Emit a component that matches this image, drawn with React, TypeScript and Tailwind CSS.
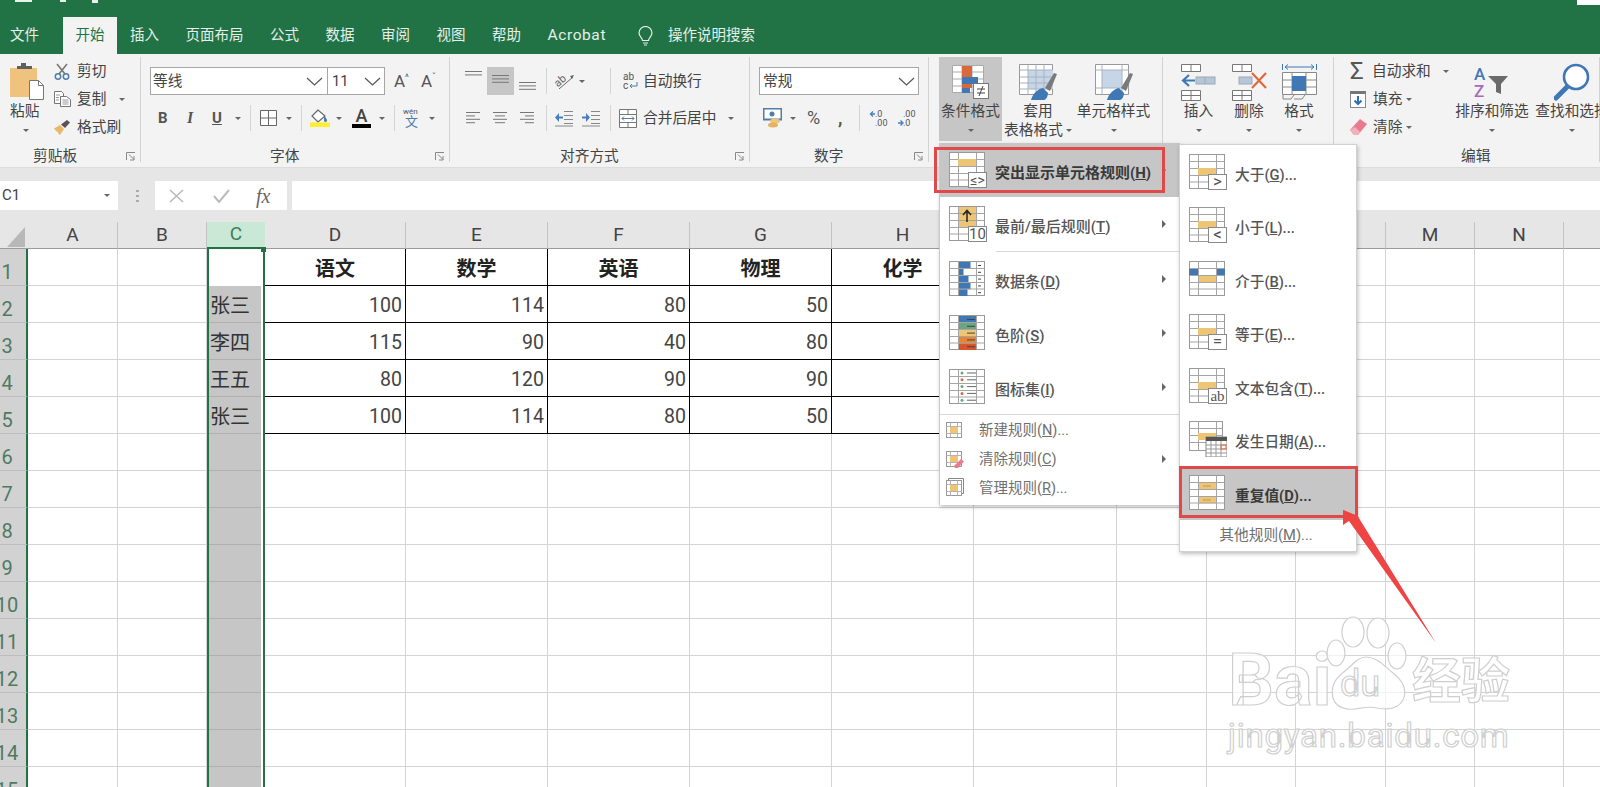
import type { ReactNode } from "react";

function Caret({ className = "" }: { className?: string }) {
  return (
    <span
      className={`inline-block h-0 w-0 shrink-0 border-x-[3px] border-t-[3px] border-x-transparent border-t-[#666] ${className}`}
    />
  );
}

function Sep({ className = "" }: { className?: string }) {
  return <span className={`h-[26px] w-px shrink-0 bg-[#d4d4d4] ${className}`} />;
}

function Chevron() {
  return (
    <svg width="17" height="9" viewBox="0 0 17 9" className="shrink-0">
      <polyline points="1,1 8.5,8 16,1" fill="none" stroke="#555" strokeWidth="1.2" />
    </svg>
  );
}

function Launcher() {
  return (
    <svg width="10" height="9" viewBox="0 0 10 9" className="shrink-0">
      <path d="M.5 8V.5H9M3 2.5l5 5M8 4v4H4" fill="none" stroke="#888" strokeWidth="1" />
    </svg>
  );
}

/* icons, ribbon */
function PasteIcon() {
  return (
    <svg width="34" height="37" viewBox="0 0 34 37">
      <rect x="0" y="5" width="27" height="29" fill="#efc27e" />
      <path d="M7 6V3h4V0h5v3h6v3z" fill="#5f5f5f" />
      <path d="M19.5 17.5h9l5 5v14h-14z" fill="#fff" stroke="#777" />
      <path d="M28.5 17.5v5h5" fill="none" stroke="#777" />
    </svg>
  );
}

function ScissorsIcon() {
  return (
    <svg width="16" height="17" viewBox="0 0 16 17">
      <path d="M5 11 13 1M11 11 3 1" stroke="#777" strokeWidth="1.6" fill="none" />
      <circle cx="4" cy="13.5" r="2.7" fill="none" stroke="#4f7ea8" strokeWidth="1.5" />
      <circle cx="12" cy="13.5" r="2.7" fill="none" stroke="#4f7ea8" strokeWidth="1.5" />
    </svg>
  );
}

function CopyIcon() {
  return (
    <svg width="17" height="16" viewBox="0 0 17 16">
      <path d="M.5.5h7l2 2v3h-3v7h-6z" fill="#fff" stroke="#777" />
      <path d="M6.5 5.5h6l4 3v7h-10z" fill="#fff" stroke="#777" />
      <path d="M2 4h4M2 6.5h3M2 9h3M8.5 9h6M8.5 11h6M8.5 13h6" stroke="#999" />
    </svg>
  );
}

function BrushIcon() {
  return (
    <svg width="17" height="15" viewBox="0 0 17 15">
      <path d="M0 8.5 6 5l4 4-4 6c-2-1-2-3-2-3s-2-.5-4-3.5z" fill="#e9b869" />
      <path d="M7 4.5 13 0l3 2.500-5 5.500z" fill="#555" />
    </svg>
  );
}

function BordersIcon() {
  return (
    <svg width="17" height="16" viewBox="0 0 17 16">
      <path d="M.5.5h16v15H.5zM8.5.5v15M.5 8h16" fill="#fff" stroke="#666" />
    </svg>
  );
}

function FillIcon() {
  return (
    <svg width="20" height="18" viewBox="0 0 20 18">
      <path d="M8 1 2 7l6 6 7-6z" fill="#fff" stroke="#666" strokeWidth="1.2" />
      <path d="M14 7c2 2 3 3 3 4.5a1.500 1.500 0 0 1-3 0z" fill="#4f7ea8" />
      <rect x="0" y="13.5" width="20" height="4.5" fill="#ffef2f" />
    </svg>
  );
}

function WenIcon() {
  return (
    <svg width="17" height="22" viewBox="0 0 17 22" className="overflow-visible">
      <text x="0" y="7" fontSize="8" fill="#555" fontFamily="Roboto">wén</text>
      <text x="2" y="19" fontSize="13" fill="#4f7ea8" fontFamily="Noto Sans CJK SC">文</text>
    </svg>
  );
}

function Lines({ x, w }: { x: number[]; w: number[] }) {
  return (
    <svg width="17" height="14" viewBox="0 0 17 14" className="shrink-0">
      {x.map((left, i) => (
        <rect key={i} x={left} y={1 + i * 3.4} width={w[i]} height="1" fill="#777" />
      ))}
    </svg>
  );
}

function OrientIcon() {
  return (
    <svg width="20" height="18" viewBox="0 0 20 18" className="overflow-visible">
      <text x="0" y="12" fontSize="11" fill="#666" fontFamily="Roboto" transform="rotate(-40 6 10)">ab</text>
      <path d="M4 17 18 5" stroke="#666" />
      <path d="M19 3l-4 1 2 3z" fill="#666" />
    </svg>
  );
}

function WrapIcon() {
  return (
    <svg width="16" height="18" viewBox="0 0 16 18" className="overflow-visible">
      <text x="1" y="8" fontSize="10" fill="#555" fontFamily="Roboto">ab</text>
      <text x="1" y="17" fontSize="10" fill="#555" fontFamily="Roboto">c</text>
      <path d="M15 10v4H8M10 12l-2 2 2 2" fill="none" stroke="#4f7ea8" />
    </svg>
  );
}

function MergeIcon() {
  return (
    <svg width="18" height="19" viewBox="0 0 18 19">
      <path d="M.5.5h17v18H.5zM.5 5.5h17M.5 13.5h17M9 .5v5M9 13.5v5" fill="#fff" stroke="#777" />
      <path d="M3 9.5h12M3 9.5l2-2M3 9.5l2 2M15 9.5l-2-2M15 9.5l-2 2" fill="none" stroke="#4f7ea8" />
    </svg>
  );
}

function IndentIcon({ flip }: { flip?: boolean }) {
  return (
    <svg width="18" height="17" viewBox="0 0 18 17">
      <path d="M9 1.5h9M9 5.5h9M9 9.5h9M9 13.5h9" stroke="#888" />
      <path d="M0 16h18" stroke="#888" />
      {flip ? (
        <path d="M0 6.5h4V3l4 4.5-4 4.5V8.5H0z" fill="#4a7fbe" />
      ) : (
        <path d="M8 6.5H4V3L0 7.500 4 12V8.500h4z" fill="#4a7fbe" />
      )}
    </svg>
  );
}

function MoneyIcon() {
  return (
    <svg width="19" height="20" viewBox="0 0 19 20">
      <rect x=".5" y=".5" width="18" height="11" fill="#fff" stroke="#4f7ea8" strokeWidth="2" />
      <circle cx="9" cy="6" r="2.5" fill="#4f7ea8" />
      <ellipse cx="12" cy="13" rx="5" ry="2.5" fill="#eec57f" />
      <ellipse cx="10" cy="17" rx="5" ry="2.5" fill="#e5b263" />
    </svg>
  );
}

function DecIcon({ inc }: { inc?: boolean }) {
  return (
    <svg width="17" height="18" viewBox="0 0 17 18" className="overflow-visible">
      <text x="5" y="8" fontSize="9" fill="#555" fontFamily="Roboto">{inc ? ".0" : ".00"}</text>
      <text x="5" y="17" fontSize="9" fill="#555" fontFamily="Roboto">{inc ? ".00" : ".0"}</text>
      {inc ? (
        <path d="M5 5H1M3 2.500 .5 5 3 7.500" stroke="#4a7fbe" strokeWidth="1.4" fill="none" />
      ) : (
        <path d="M0 14h4M2.500 11.500 5 14l-2.500 2.500" stroke="#4a7fbe" strokeWidth="1.4" fill="none" />
      )}
    </svg>
  );
}

function CondFormatIcon() {
  return (
    <svg width="37" height="34" viewBox="0 0 37 34">
      <path d="M.5.5h31v27H.5zM10 .5v27M20 .5v27M.5 7h31M.5 14h31M.5 21h31" fill="#fff" stroke="#aaa" />
      <rect x="10" y="1" width="10" height="6" fill="#d9683a" />
      <rect x="10" y="7" width="10" height="7" fill="#d9683a" />
      <rect x="10" y="12" width="16" height="7" fill="#3f78b5" />
      <rect x="10" y="19" width="10" height="4" fill="#d9683a" />
      <rect x="10" y="23" width="8" height="5" fill="#3f78b5" />
      <rect x="21.5" y="18.5" width="15" height="15" fill="#fff" stroke="#777" />
      <path d="M25 24h8M25 28h8M31 21l-4 10" stroke="#444" fill="none" />
    </svg>
  );
}

function TableStyleIcon() {
  return (
    <svg width="38" height="37" viewBox="0 0 38 37">
      <path d="M.5.5h33v30H.5z" fill="#fff" stroke="#999" />
      <rect x="9" y="6" width="25" height="19" fill="#c6d6e8" />
      <path d="M.5 6h33M.5 13h33M.5 19h33M.5 25h33M9 .5v30M17 .5v30M25 .5v30" stroke="#a8b2bd" fill="none" />
      <path d="M26 24 35 9l3 1-7 17z" fill="#7a7a7a" />
      <path d="M12 36c2-7 7-11 12-12l5 5c0 3-2 7-4 7z" fill="#3f78b5" />
    </svg>
  );
}

function CellStyleIcon() {
  return (
    <svg width="38" height="37" viewBox="0 0 38 37">
      <path d="M.5.5h33v30H.5z" fill="#fff" stroke="#999" />
      <rect x="7" y="6" width="20" height="18" fill="#c6d6e8" />
      <path d="M.5 6h33M.5 24h33M7 .5v30M27 .5v30" stroke="#a8b2bd" fill="none" />
      <path d="M26 24 35 9l3 1-7 17z" fill="#7a7a7a" />
      <path d="M12 36c2-7 7-11 12-12l5 5c0 3-2 7-4 7z" fill="#3f78b5" />
    </svg>
  );
}

function InsertIcon() {
  return (
    <svg width="35" height="37" viewBox="0 0 35 37">
      <path d="M.5.5h19v7H.5zM10 .5v7M.5 26.5h19v10H.5zM10 26.5v10M.5 31.5h19" fill="#fff" stroke="#777" />
      <rect x="15" y="13" width="19" height="7" fill="#b7c6d6" stroke="#9aa9b8" />
      <path d="M24 13v7" stroke="#9aa9b8" />
      <path d="M14 16.5H3M8 11l-6 5.500L8 22" fill="none" stroke="#3f78b5" strokeWidth="2.2" />
    </svg>
  );
}

function DeleteIcon() {
  return (
    <svg width="35" height="37" viewBox="0 0 35 37">
      <path d="M.5.5h19v7H.5zM10 .5v7M.5 26.5h19v10H.5zM10 26.5v10M.5 31.5h19" fill="#fff" stroke="#777" />
      <rect x="7" y="13" width="13" height="7" fill="#b7c6d6" stroke="#9aa9b8" />
      <path d="M20 9 34 24M34 9 20 24" stroke="#dd6a3c" strokeWidth="2.2" />
    </svg>
  );
}

function CellFormatIcon() {
  return (
    <svg width="35" height="38" viewBox="0 0 35 38">
      <path d="M.5 1v6M34.5 1v6" stroke="#3f78b5" />
      <path d="M3 4h29M3 4l3-2.500M3 4l3 2.500M32 4l-3-2.500M32 4l-3 2.500" fill="none" stroke="#3f78b5" />
      <path d="M.5 9.5h34v22H.5zM10 9.5v22M24 9.5v22M.5 17h34M.5 24h34" fill="#fff" stroke="#888" />
      <rect x="10" y="13" width="14" height="15" fill="#3f78b5" />
      <path d="M1 32v4h8l3-4M12 36h8l3-4" fill="none" stroke="#888" />
    </svg>
  );
}

function FillDownIcon() {
  return (
    <svg width="16" height="17" viewBox="0 0 16 17">
      <rect x=".5" y=".5" width="15" height="16" fill="#fff" stroke="#888" />
      <rect x="0" y="0" width="16" height="3" fill="#777" />
      <path d="M8 5v8M4.5 9.500 8 13l3.500-3.500" fill="none" stroke="#2f6fb5" strokeWidth="2" />
    </svg>
  );
}

function EraserIcon() {
  return (
    <svg width="17" height="16" viewBox="0 0 17 16">
      <path d="M0 11 10 0l7 5-9 11H4z" fill="#ea7a8e" />
      <path d="M0 11l4 5h4l2-3-5-5z" fill="#f3b0bb" />
    </svg>
  );
}

function SortIcon() {
  return (
    <svg width="36" height="33" viewBox="0 0 36 33" className="overflow-visible">
      <text x="0" y="14" fontSize="17" fill="#3f78b5" fontFamily="Roboto" fontWeight="500">A</text>
      <text x="0" y="31" fontSize="17" fill="#a56bbd" fontFamily="Roboto" fontWeight="500">Z</text>
      <path d="M14 10h20l-7 8v10l-5-2v-8z" fill="#6a6a6a" />
    </svg>
  );
}

function FindIcon() {
  return (
    <svg width="36" height="38" viewBox="0 0 36 38">
      <circle cx="22" cy="14" r="12" fill="#fff" stroke="#3f78b5" strokeWidth="2.6" />
      <path d="M13 24 2 35" stroke="#3f78b5" strokeWidth="5" strokeLinecap="round" />
    </svg>
  );
}

/* icons, menu */
const GRID_LINES = "M.5 7.5h35M.5 14.5h35M.5 21.5h35M.5 28h35M9.5.5v34M27.5.5v34";

function RuleIcon({ children }: { children?: ReactNode }) {
  return (
    <svg width="38" height="36" viewBox="0 0 38 36" className="shrink-0">
      <rect x=".5" y=".5" width="35" height="34" fill="#fff" stroke="#999" />
      {children}
      <path d={GRID_LINES} stroke="#a5a5a5" fill="none" />
    </svg>
  );
}

function BadgeIcon({
  bar = 14,
  label,
  size = 17,
  serif,
}: {
  bar?: number;
  label: string;
  size?: number;
  serif?: boolean;
}) {
  return (
    <svg width="38" height="36" viewBox="0 0 38 36" className="shrink-0 overflow-visible">
      <rect x=".5" y=".5" width="35" height="34" fill="#fff" stroke="#999" />
      <path d={GRID_LINES} stroke="#a5a5a5" fill="none" />
      <rect x="9" y={bar} width="18" height="7" fill="#eec574" />
      <rect x="19.5" y="20.5" width="18" height="15" fill="#fff" stroke="#888" />
      <text
        x="28.5"
        y="33"
        fontSize={size}
        textAnchor="middle"
        fill="#555"
        fontFamily={serif ? "Liberation Serif" : "Roboto"}
      >
        {label}
      </text>
    </svg>
  );
}

function BarsIcon() {
  const w = [12, 5, 10, 12, 9];
  return (
    <RuleIcon>
      {w.map((v, i) => (
        <rect key={i} x="9.5" y={1 + i * 6.8} width={v} height="6.8" fill="#3f78b5" />
      ))}
      {w.map((v, i) => (
        <rect key={`d${i}`} x="29" y={4 + i * 6.8} width="3" height="1" fill="#444" />
      ))}
    </RuleIcon>
  );
}

function ScaleIcon() {
  const c = ["#3f78b5", "#6ba582", "#eec574", "#e8842f", "#d9562a"];
  return (
    <RuleIcon>
      {c.map((v, i) => (
        <g key={v}>
          <rect x="9.5" y={1 + i * 6.8} width="18" height="6.8" fill={v} />
          <rect x="18" y={4 + i * 6.8} width="8" height="1" fill="#444" />
        </g>
      ))}
    </RuleIcon>
  );
}

function IconSetIcon() {
  const c = ["#6ba582", "#dd6a3c", "#6ba582", "#dd6a3c", "#6ba582"];
  return (
    <RuleIcon>
      {c.map((v, i) => (
        <g key={i}>
          <circle cx="13" cy={4 + i * 6.8} r="1.5" fill={v} />
          <rect x="18" y={3.5 + i * 6.8} width="9" height="1" fill="#666" />
        </g>
      ))}
    </RuleIcon>
  );
}

function TopIcon() {
  return (
    <svg width="38" height="36" viewBox="0 0 38 36" className="shrink-0 overflow-visible">
      <rect x=".5" y=".5" width="35" height="34" fill="#fff" stroke="#999" />
      <rect x="9.5" y="1" width="18" height="20" fill="#eec574" />
      <path d={GRID_LINES} stroke="#a5a5a5" fill="none" />
      <path d="M18 16V5M14 9l4-4.500L22 9" fill="none" stroke="#222" strokeWidth="1.5" />
      <rect x="19.5" y="20.5" width="18" height="15" fill="#fff" stroke="#888" />
      <text x="28.5" y="33" fontSize="15" textAnchor="middle" fill="#555" fontFamily="Roboto">10</text>
    </svg>
  );
}

function BetweenIcon() {
  return (
    <RuleIcon>
      <rect x="0" y="7.5" width="9" height="7" fill="#3f78b5" />
      <rect x="27" y="7.5" width="9" height="7" fill="#3f78b5" />
      <rect x="9" y="14.5" width="18" height="7" fill="#eec574" />
    </RuleIcon>
  );
}

function DateIcon() {
  return (
    <svg width="38" height="36" viewBox="0 0 38 36" className="shrink-0">
      <rect x=".5" y=".5" width="33" height="29" fill="#fff" stroke="#999" />
      <path d="M.5 7.5h33M.5 14.5h33M.5 21.5h33M9.5.5v29M27.5.5v29" stroke="#a5a5a5" fill="none" />
      <rect x="9" y="12" width="18" height="7" fill="#eec574" />
      <rect x="17" y="16" width="21" height="20" fill="#fff" stroke="#888" />
      <rect x="17" y="16" width="21" height="4" fill="#555" />
      <path d="M17 24h21M17 28h21M17 32h21M22 20v16M27 20v16M32 20v16" stroke="#999" fill="none" />
      <rect x="32" y="24" width="5" height="4" fill="none" stroke="#dd6a3c" />
    </svg>
  );
}

function DupIcon() {
  return (
    <RuleIcon>
      <rect x="9" y="7.5" width="18" height="7" fill="#eec574" />
      <rect x="9" y="21.5" width="18" height="7" fill="#eec574" />
      <path d="M14 11h8M14 25h8" stroke="#c9954b" />
    </RuleIcon>
  );
}

function SmallRule({ kind }: { kind: "new" | "clear" | "manage" }) {
  return (
    <svg width="18" height="19" viewBox="0 0 18 19" className="shrink-0">
      {kind === "manage" && <path d="M2.5 2V.5h15v15H16" fill="none" stroke="#888" />}
      <rect x=".5" y="2.5" width="15" height="15" fill="#fff" stroke="#999" />
      <path d="M.5 6.5h15M.5 13.5h15M4.5 2.5v15M11.5 2.5v15" stroke="#b5b5b5" fill="none" />
      <rect x="4" y="7" width="8" height="6" fill="#eec574" />
      {kind === "clear" && <path d="M8 17 15 10l3 2.500-6 6.500H9z" fill="#ea7a8e" />}
    </svg>
  );
}

function Mn({ text, k, tail = "" }: { text: string; k: string; tail?: string }) {
  return (
    <>
      {text}(<u>{k}</u>){tail}
    </>
  );
}

function Large({
  w,
  icon,
  line1,
  line2,
  active,
}: {
  w: string;
  icon: ReactNode;
  line1: string;
  line2?: ReactNode;
  active?: boolean;
}) {
  return (
    <div className={`flex h-[84px] shrink-0 flex-col items-center pt-[6px] ${w} ${active ? "bg-[#c6c6c6]" : ""}`}>
      <div className="flex h-[38px] items-center justify-center">{icon}</div>
      <div className="h-[20px] whitespace-nowrap text-[14.7px] leading-[20px]">{line1}</div>
      <div className="flex h-[18px] items-center justify-center whitespace-nowrap text-[14.7px] leading-[18px]">
        {line2 ?? <Caret />}
      </div>
    </div>
  );
}

function Group({
  w,
  label,
  labelPad,
  launcher = true,
  children,
}: {
  w: string;
  label: string;
  labelPad: string;
  launcher?: boolean;
  children: ReactNode;
}) {
  return (
    <div className={`flex h-full shrink-0 flex-col border-r border-[#d2d2d2] ${w}`}>
      <div className="flex h-[91px] shrink-0">{children}</div>
      <div className={`flex h-[16px] shrink-0 items-center pr-[4px] text-[14.7px] ${labelPad}`}>
        <span>{label}</span>
        {launcher && (
          <span className="ml-auto">
            <Launcher />
          </span>
        )}
      </div>
    </div>
  );
}

function SmallRow({ icon, text, caret }: { icon: ReactNode; text: string; caret?: ReactNode }) {
  return (
    <div className="flex h-[28px] items-center whitespace-nowrap text-[14.7px]">
      <span className="flex w-[23px] shrink-0 items-center">{icon}</span>
      <span>{text}</span>
      {caret}
    </div>
  );
}

function Ribbon() {
  return (
    <div className="flex h-[113px] bg-[#f3f3f3] pb-[5px] pt-[3px] text-[#444]">
      <Group w="w-[141px]" label="剪贴板" labelPad="pl-[33px]">
        <div className="ml-[10px] flex w-[34px] flex-col items-start pt-[6px]">
          <div className="h-[38px]">
            <PasteIcon />
          </div>
          <div className="h-[20px] whitespace-nowrap text-[14.7px] leading-[20px]">粘贴</div>
          <div className="flex h-[18px] items-center pl-[13px]">
            <Caret />
          </div>
        </div>
        <div className="ml-[10px] flex flex-col">
          <SmallRow icon={<ScissorsIcon />} text="剪切" />
          <SmallRow icon={<CopyIcon />} text="复制" caret={<Caret className="ml-[13px]" />} />
          <SmallRow icon={<BrushIcon />} text="格式刷" />
        </div>
      </Group>

      <Group w="w-[309px]" label="字体" labelPad="pl-[129px]">
        <div className="flex flex-col pt-[10px]">
          <div className="flex h-[28px] items-center pl-[9px]">
            <div className="flex h-[28px] w-[178px] items-center justify-between border border-[#a6a6a6] bg-white pl-[2px] pr-[4px] text-[14.7px]">
              等线
              <Chevron />
            </div>
            <div className="flex h-[28px] w-[57px] items-center justify-between border border-l-0 border-[#a6a6a6] bg-white pl-[4px] pr-[3px] text-[14.7px]">
              11
              <Chevron />
            </div>
            <span className="ml-[9px] w-[16px] whitespace-nowrap text-[17px] leading-none text-[#555]">
              A<span className="align-top text-[9px] leading-none">^</span>
            </span>
            <span className="ml-[11px] w-[16px] whitespace-nowrap text-[17px] leading-none text-[#555]">
              A<span className="align-top text-[9px] leading-none">ˇ</span>
            </span>
          </div>
          <div className="mt-[9px] flex h-[28px] items-center text-[#555]">
            <span className="ml-[17px] w-[10px] text-[15px] font-bold">B</span>
            <span className="ml-[19px] w-[9px] font-[family-name:'Liberation_Serif'] text-[16px] font-bold italic">I</span>
            <span className="ml-[16px] w-[11px] text-[15px] font-bold underline">U</span>
            <Caret className="ml-[12px]" />
            <Sep className="ml-[9px]" />
            <span className="ml-[9px]">
              <BordersIcon />
            </span>
            <Caret className="ml-[9px]" />
            <Sep className="ml-[9px]" />
            <span className="ml-[8px]">
              <FillIcon />
            </span>
            <Caret className="ml-[6px]" />
            <span className="ml-[10px] flex w-[19px] flex-col items-center text-[18px] font-medium leading-[15px] text-[#444]">
              A<span className="mt-[1px] h-[4px] w-[19px] bg-black" />
            </span>
            <Caret className="ml-[8px]" />
            <Sep className="ml-[9px]" />
            <span className="ml-[8px]">
              <WenIcon />
            </span>
            <Caret className="ml-[9px]" />
          </div>
        </div>
      </Group>

      <Group w="w-[300px]" label="对齐方式" labelPad="pl-[110px]">
        <div className="flex flex-col pt-[10px]">
          <div className="flex h-[28px] items-center">
            <span className="ml-[15px] flex h-[28px] w-[17px] items-start pt-[3px]">
              <Lines x={[0, 0]} w={[17, 17]} />
            </span>
            <span className="ml-[5px] flex h-[28px] w-[27px] items-center justify-center bg-[#c6c6c6]">
              <Lines x={[0, 0, 0]} w={[17, 17, 17]} />
            </span>
            <span className="ml-[5px] flex h-[28px] w-[17px] items-end">
              <Lines x={[0, 0, 0]} w={[17, 17, 17]} />
            </span>
            <Sep className="ml-[10px]" />
            <span className="ml-[8px]">
              <OrientIcon />
            </span>
            <Caret className="ml-[4px]" />
            <Sep className="ml-[25px]" />
            <span className="ml-[11px]">
              <WrapIcon />
            </span>
            <span className="ml-[5px] whitespace-nowrap text-[14.7px]">自动换行</span>
          </div>
          <div className="mt-[9px] flex h-[28px] items-center">
            <span className="ml-[16px] w-[14px]">
              <Lines x={[0, 0, 0, 0]} w={[14, 9, 14, 9]} />
            </span>
            <span className="ml-[13px] w-[14px]">
              <Lines x={[0, 2, 0, 2]} w={[14, 10, 14, 10]} />
            </span>
            <span className="ml-[13px] w-[14px]">
              <Lines x={[0, 5, 0, 5]} w={[14, 9, 14, 9]} />
            </span>
            <Sep className="ml-[12px]" />
            <span className="ml-[8px]">
              <IndentIcon />
            </span>
            <span className="ml-[9px]">
              <IndentIcon flip />
            </span>
            <Sep className="ml-[10px]" />
            <span className="ml-[8px]">
              <MergeIcon />
            </span>
            <span className="ml-[6px] whitespace-nowrap text-[14.7px]">合并后居中</span>
            <Caret className="ml-[12px]" />
          </div>
        </div>
      </Group>

      <Group w="w-[179px]" label="数字" labelPad="pl-[64px]">
        <div className="flex flex-col pt-[10px]">
          <div className="flex h-[28px] items-center pl-[9px]">
            <div className="flex h-[28px] w-[160px] items-center justify-between border border-[#a6a6a6] bg-white pl-[3px] pr-[3px] text-[14.7px]">
              常规
              <Chevron />
            </div>
          </div>
          <div className="mt-[9px] flex h-[28px] items-center">
            <span className="ml-[13px]">
              <MoneyIcon />
            </span>
            <Caret className="ml-[8px]" />
            <span className="ml-[11px] w-[17px] text-[18px] leading-none text-[#555]">%</span>
            <span className="ml-[14px] w-[6px] text-[18px] font-bold leading-none text-[#555]">,</span>
            <Sep className="ml-[15px]" />
            <span className="ml-[10px]">
              <DecIcon inc />
            </span>
            <span className="ml-[11px]">
              <DecIcon />
            </span>
          </div>
        </div>
      </Group>

      <Group w="w-[234px]" label="" labelPad="pl-0" launcher={false}>
        <div className="ml-[10px] flex">
          <Large w="w-[63px]" icon={<CondFormatIcon />} line1="条件格式" active />
          <Large
            w="w-[72px]"
            icon={<TableStyleIcon />}
            line1="套用"
            line2={
              <>
                表格格式
                <Caret className="ml-[3px]" />
              </>
            }
          />
          <Large w="w-[79px]" icon={<CellStyleIcon />} line1="单元格样式" />
        </div>
      </Group>

      <Group w="w-[171px]" label="" labelPad="pl-0" launcher={false}>
        <div className="ml-[10px] flex">
          <Large w="w-[51px]" icon={<InsertIcon />} line1="插入" />
          <Large w="w-[50px]" icon={<DeleteIcon />} line1="删除" />
          <Large w="w-[50px]" icon={<CellFormatIcon />} line1="格式" />
        </div>
      </Group>

      <Group w="w-[266px]" label="编辑" labelPad="pl-[127px]" launcher={false}>
        <div className="ml-[16px] flex w-[102px] shrink-0 flex-col">
          <div className="flex h-[28px] items-center whitespace-nowrap text-[14.7px]">
            <span className="w-[22px] shrink-0 text-[24px] leading-none text-[#555]">Σ</span>
            自动求和
            <Caret className="ml-[12px]" />
          </div>
          <SmallRow icon={<FillDownIcon />} text="填充" caret={<Caret className="ml-[4px]" />} />
          <SmallRow icon={<EraserIcon />} text="清除" caret={<Caret className="ml-[4px]" />} />
        </div>
        <Large w="w-[80px]" icon={<SortIcon />} line1="排序和筛选" />
        <Large w="w-[80px]" icon={<FindIcon />} line1="查找和选择" />
      </Group>
    </div>
  );
}

function FormulaBar() {
  return (
    <div className="flex h-[55px] items-start border-t border-[#dcdcdc] bg-[#e6e6e6] pt-[13px] text-[#444]">
      <div className="flex h-[29px] w-[118px] shrink-0 items-center justify-between bg-white pl-[2px] pr-[8px] text-[15px]">
        C1
        <Caret />
      </div>
      <div className="ml-[17px] flex h-[29px] w-[4px] shrink-0 flex-col items-center justify-center gap-[3px]">
        <span className="h-[2px] w-[3px] bg-[#aaa]" />
        <span className="h-[2px] w-[3px] bg-[#aaa]" />
        <span className="h-[2px] w-[3px] bg-[#aaa]" />
      </div>
      <div className="ml-[16px] flex h-[29px] w-[132px] shrink-0 items-center bg-white">
        <svg width="15" height="14" viewBox="0 0 15 14" className="ml-[14px]">
          <path d="M1 1l13 12M14 1 1 13" stroke="#bbb" strokeWidth="1.6" />
        </svg>
        <svg width="17" height="14" viewBox="0 0 17 14" className="ml-[29px]">
          <path d="M1 7l5 6L16 1" fill="none" stroke="#bbb" strokeWidth="2" />
        </svg>
        <span className="ml-[26px] font-[family-name:'Liberation_Serif'] text-[20px] italic text-[#666]">fx</span>
      </div>
      <div className="ml-[5px] h-[29px] flex-1 bg-white" />
    </div>
  );
}

const COLS = [
  { k: "A", w: "w-[90px]" },
  { k: "B", w: "w-[89px]" },
  { k: "C", w: "w-[58px]" },
  { k: "D", w: "w-[141px]" },
  { k: "E", w: "w-[142px]" },
  { k: "F", w: "w-[142px]" },
  { k: "G", w: "w-[142px]" },
  { k: "H", w: "w-[142px]" },
  { k: "I", w: "w-[143px]" },
  { k: "J", w: "w-[90px]" },
  { k: "K", w: "w-[89px]" },
  { k: "L", w: "w-[90px]" },
  { k: "M", w: "w-[89px]" },
  { k: "N", w: "w-[89px]" },
  { k: "O", w: "w-[90px]" },
];

const DATA: Record<number, string[]> = {
  1: ["", "语文", "数学", "英语", "物理", "化学"],
  2: ["张三", "100", "114", "80", "50"],
  3: ["李四", "115", "90", "40", "80"],
  4: ["王五", "80", "120", "90", "90"],
  5: ["张三", "100", "114", "80", "50"],
};

function SheetCell({ row, col, w }: { row: number; col: number; w: string }) {
  const values = DATA[row] ?? [];
  if (col === 2) {
    return (
      <div className={`relative flex h-[37px] shrink-0 border-x-2 border-[#217346] bg-white ${w}`}>
        <div
          className={`flex h-full w-[52px] items-center whitespace-nowrap pl-[1px] pt-[3px] text-[20px] text-[#333] ${
            row === 1 ? "bg-white" : "border-b border-[#b0b0b0] bg-[#c6c6c6]"
          }`}
        >
          {values[0]}
        </div>
        {row === 1 && <span className="absolute -right-[3px] -top-[2px] h-[5px] w-[5px] bg-[#217346]" />}
      </div>
    );
  }
  const inTable = row <= 5 && col >= 3 && col <= 7;
  const text = inTable ? values[col - 2] : undefined;
  return (
    <div
      className={`flex h-[37px] shrink-0 items-center border-b border-r pt-[3px] ${w} ${
        inTable ? "border-b-black" : "border-b-[#d4d4d4]"
      } ${inTable && col < 7 ? "border-r-black" : "border-r-[#d4d4d4]"} ${
        row === 1 ? "justify-center text-[20px] font-bold text-[#222]" : "justify-end pr-[3px] text-[19.5px] text-[#444]"
      }`}
    >
      {text}
    </div>
  );
}

function Sheet() {
  const rows = Array.from({ length: 15 }, (_, i) => i + 1);
  return (
    <div className="flex-1 overflow-hidden bg-white">
      <div className="flex h-[27px] bg-[#e6e6e6]">
        <div className="flex h-full w-[28px] shrink-0 items-end justify-end border-b border-[#9b9b9b] pb-[1px] pr-[3px]">
          <svg width="18" height="20" viewBox="0 0 18 20">
            <polygon points="18,0 18,20 0,20" fill="#b8b8b8" />
          </svg>
        </div>
        {COLS.map((c) => (
          <div
            key={c.k}
            className={`flex h-full shrink-0 items-center justify-center text-[19px] ${c.w} ${
              c.k === "C"
                ? "border-b-2 border-[#217346] bg-[#c9e9d6] text-[#3f7d5b]"
                : "border-b border-r border-b-[#9b9b9b] border-r-[#c4c4c4] text-[#444]"
            }`}
          >
            {c.k}
          </div>
        ))}
      </div>
      {rows.map((r) => (
        <div key={r} className="flex">
          <div className="flex h-[37px] w-[28px] shrink-0 items-end justify-center border-b border-r-2 border-b-[#bdbdbd] border-r-[#217346] bg-[#d2d2d2] pr-[12px] text-[20px] leading-[26px] text-[#4f7a62]">
            {r}
          </div>
          {COLS.map((c, i) => (
            <SheetCell key={c.k} row={r} col={i} w={c.w} />
          ))}
        </div>
      ))}
    </div>
  );
}

function Arrow({ className = "" }: { className?: string }) {
  return <span className={`h-0 w-0 border-y-[4px] border-l-[4px] border-y-transparent border-l-[#666] ${className}`} />;
}

function MainItem({
  icon,
  children,
  hi,
  arrow = true,
}: {
  icon: ReactNode;
  children: ReactNode;
  hi?: boolean;
  arrow?: boolean;
}) {
  return (
    <div className={`relative flex h-[54px] items-center pl-[9px] pr-[14px] ${hi ? "bg-[#c6c6c6]" : ""}`}>
      {icon}
      <span
        className={`ml-[8px] whitespace-nowrap pt-[6px] text-[15px] ${
          hi ? "font-bold text-[#3a3a3a]" : "font-medium text-[#555]"
        }`}
      >
        {children}
      </span>
      {arrow && <Arrow className="ml-auto" />}
      {hi && <span className="absolute -left-[6px] top-[4px] h-[46px] w-[231px] border-[3px] border-[#e0484a]" />}
    </div>
  );
}

function SmallItem({ icon, children, arrow }: { icon: ReactNode; children: ReactNode; arrow?: boolean }) {
  return (
    <div className="flex h-[29px] items-center pl-[6px] pr-[14px]">
      {icon}
      <span className="ml-[15px] whitespace-nowrap pt-[3px] text-[14.5px] text-[#707070]">{children}</span>
      {arrow && <Arrow className="ml-auto" />}
    </div>
  );
}

function MainMenu() {
  return (
    <div className="absolute left-[939px] top-[143px] flex h-[362px] w-[241px] flex-col border-l border-[#c8c8c8] bg-white shadow-[1px_2px_4px_rgba(0,0,0,0.25)]">
      <MainItem hi icon={<BadgeIcon bar={7} label="≤>" size={14} />}>
        突出显示单元格规则(<u>H</u>)
      </MainItem>
      <MainItem icon={<TopIcon />}>
        <Mn text="最前/最后规则" k="T" />
      </MainItem>
      <div className="ml-[56px] h-px shrink-0 bg-[#d8d8d8]" />
      <MainItem icon={<BarsIcon />}>
        <Mn text="数据条" k="D" />
      </MainItem>
      <MainItem icon={<ScaleIcon />}>
        <Mn text="色阶" k="S" />
      </MainItem>
      <MainItem icon={<IconSetIcon />}>
        <Mn text="图标集" k="I" />
      </MainItem>
      <div className="h-px shrink-0 bg-[#d8d8d8]" />
      <SmallItem icon={<SmallRule kind="new" />}>
        <Mn text="新建规则" k="N" tail="..." />
      </SmallItem>
      <SmallItem icon={<SmallRule kind="clear" />} arrow>
        <Mn text="清除规则" k="C" />
      </SmallItem>
      <SmallItem icon={<SmallRule kind="manage" />}>
        <Mn text="管理规则" k="R" tail="..." />
      </SmallItem>
    </div>
  );
}

function SubItem({ icon, children, hi }: { icon: ReactNode; children: ReactNode; hi?: boolean }) {
  return (
    <div className={`relative flex h-[53.5px] items-center pl-[9px] ${hi ? "bg-[#c6c6c6]" : ""}`}>
      {icon}
      <span
        className={`ml-[8px] whitespace-nowrap pt-[6px] text-[14.7px] ${
          hi ? "font-bold text-[#3a3a3a]" : "font-medium text-[#555]"
        }`}
      >
        {children}
      </span>
      {hi && <span className="absolute -left-[1px] top-0 h-[52px] w-[179px] border-[3px] border-[#e0484a]" />}
    </div>
  );
}

function SubMenu() {
  return (
    <div className="absolute left-[1179px] top-[144px] flex h-[408px] w-[178px] flex-col border border-[#d0d0d0] bg-white shadow-[1px_2px_4px_rgba(0,0,0,0.25)]">
      <SubItem icon={<BadgeIcon bar={14} label=">" />}>
        <Mn text="大于" k="G" tail="..." />
      </SubItem>
      <SubItem icon={<BadgeIcon bar={14} label="<" />}>
        <Mn text="小于" k="L" tail="..." />
      </SubItem>
      <SubItem icon={<BetweenIcon />}>
        <Mn text="介于" k="B" tail="..." />
      </SubItem>
      <SubItem icon={<BadgeIcon bar={14} label="=" />}>
        <Mn text="等于" k="E" tail="..." />
      </SubItem>
      <SubItem icon={<BadgeIcon bar={14} label="ab" size={15} serif />}>
        <Mn text="文本包含" k="T" tail="..." />
      </SubItem>
      <SubItem icon={<DateIcon />}>
        <Mn text="发生日期" k="A" tail="..." />
      </SubItem>
      <SubItem hi icon={<DupIcon />}>
        <Mn text="重复值" k="D" tail="..." />
      </SubItem>
      <div className="flex flex-1 items-center justify-center pr-[4px] text-[14.7px] text-[#707070]">
        <Mn text="其他规则" k="M" tail="..." />
      </div>
    </div>
  );
}

function RedArrow() {
  return (
    <svg width="100" height="140" viewBox="0 0 100 140" className="absolute left-[1340px] top-[507px]">
      <polygon points="3,3 3,18 9,14 96,136 17,8 18,9" fill="#ef4444" />
      <polygon points="3,3 19,10 11,15" fill="#ef4444" />
    </svg>
  );
}

function Watermark() {
  const stroke = "absolute whitespace-nowrap text-white/70 [-webkit-text-stroke:1.2px_#cfcfcf]";
  return (
    <div className="pointer-events-none absolute left-[1225px] top-[610px] h-[150px] w-[300px]">
      <span className={`${stroke} left-[3px] top-[31px] text-[72px] font-bold leading-[80px]`}>Bai</span>
      <svg width="84" height="102" viewBox="0 0 84 102" className="absolute left-[101px] top-[3px]">
        <g fill="#ffffff" fillOpacity="0.7" stroke="#cfcfcf" strokeWidth="1.2">
          <ellipse cx="27" cy="19" rx="11" ry="15" />
          <ellipse cx="52" cy="20" rx="11" ry="15" />
          <ellipse cx="10" cy="40" rx="9" ry="13" />
          <ellipse cx="71" cy="43" rx="9" ry="13" />
          <path d="M40 44c-9 0-13 8-21 14-9 7-15 14-12 27 3 10 14 12 22 11 7-1 15-3 22-1 10 2 21 1 26-8 5-11-1-20-10-27-8-6-15-16-27-16z" />
        </g>
      </svg>
      <span className={`${stroke} left-[115px] top-[52px] text-[36px] leading-[44px]`}>du</span>
      <span className={`${stroke} left-[187px] top-[42px] text-[49px] font-bold leading-[60px]`}>经验</span>
      <span className={`${stroke} left-[3px] top-[106px] text-[33px] leading-[40px] tracking-[0.8px]`}>
        jingyan.baidu.com
      </span>
    </div>
  );
}

export default function App() {
  return (
    <div className="relative flex h-[787px] w-[1600px] flex-col overflow-hidden bg-white font-[family-name:Roboto,'Noto_Sans_CJK_SC',sans-serif]">
      <div className="h-[54px] shrink-0 bg-[#217346]">
        <div className="flex h-[17px] items-start">
          <span className="ml-[15px] h-[2px] w-[17px] bg-white/90" />
          <span className="ml-[28px] h-[2px] w-[6px] bg-white/90" />
          <span className="ml-[26px] h-[3px] w-[6px] bg-white/90" />
          <span className="ml-auto h-[5px] w-[23px] bg-white" />
        </div>
        <div className="flex h-[37px] items-center whitespace-nowrap text-[14.5px] text-[#e6efe9]">
          <span className="w-[63px] pl-[10px]">文件</span>
          <span className="flex h-full w-[54px] items-center justify-center bg-[#f3f3f3] text-[#217346]">开始</span>
          <div className="ml-[13px] flex items-center gap-[26.5px]">
            <span>插入</span>
            <span>页面布局</span>
            <span>公式</span>
            <span>数据</span>
            <span>审阅</span>
            <span>视图</span>
            <span>帮助</span>
            <span className="text-[15.5px] tracking-[0.6px]">Acrobat</span>
          </div>
          <svg width="15" height="20" viewBox="0 0 15 20" className="ml-[32px]">
            <path
              d="M4.5 14.5c0-2.500-3.500-4-3.500-7.500a6.500 6.500 0 0 1 13 0c0 3.500-3.500 5-3.500 7.500zM5 17h5M6 19h3"
              fill="none"
              stroke="#e6efe9"
              strokeWidth="1.2"
            />
          </svg>
          <span className="ml-[15px]">操作说明搜索</span>
        </div>
      </div>
      <Ribbon />
      <FormulaBar />
      <Sheet />
      <MainMenu />
      <SubMenu />
      <RedArrow />
      <Watermark />
    </div>
  );
}
